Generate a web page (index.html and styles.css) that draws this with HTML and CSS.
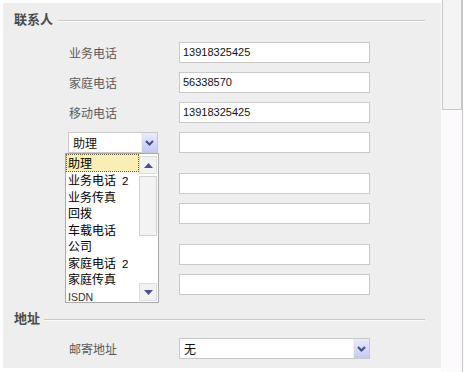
FILE: index.html
```html
<!DOCTYPE html>
<html lang="zh-CN">
<head>
<meta charset="utf-8">
<title>联系人</title>
<link rel="stylesheet" href="styles.css">
</head>
<body>
<div class="window">
  <div class="panel">
    <div class="section"><span class="section-title">联系人</span><span class="rule"></span></div>
    <div class="group first">
      <div class="row"><span class="label">业务电话</span><span class="field">13918325425</span></div>
      <div class="row"><span class="label">家庭电话</span><span class="field">56338570</span></div>
      <div class="row"><span class="label">移动电话</span><span class="field">13918325425</span></div>
      <div class="row">
        <span class="label">
          <span class="select small">
            <span class="select-text">助理</span>
            <span class="arrow-btn"><svg width="9" height="6" viewBox="0 0 9 6"><polyline points="1,1 4.5,4.5 8,1" fill="none" stroke="#3f4d86" stroke-width="2"/></svg></span>
            <span class="dropdown">
              <span class="items">
                <span class="item active">助理</span>
                <span class="item">业务电话<span class="num">2</span></span>
                <span class="item">业务传真</span>
                <span class="item">回拨</span>
                <span class="item">车载电话</span>
                <span class="item">公司</span>
                <span class="item">家庭电话<span class="num">2</span></span>
                <span class="item">家庭传真</span>
                <span class="item latin">ISDN</span>
              </span>
              <span class="list-scroll">
                <span class="sbtn"><svg width="9" height="5" viewBox="0 0 9 5"><polygon points="0,5 4.5,0 9,5" fill="#4a4fa6"/></svg></span>
                <span class="sthumb"></span>
                <span class="strack"></span>
                <span class="sbtn"><svg width="9" height="5" viewBox="0 0 9 5"><polygon points="0,0 4.5,5 9,0" fill="#4a4fa6"/></svg></span>
              </span>
            </span>
          </span>
        </span>
        <span class="field"></span>
      </div>
    </div>
    <div class="group">
      <div class="row"><span class="label"></span><span class="field"></span></div>
      <div class="row"><span class="label"></span><span class="field"></span></div>
    </div>
    <div class="group">
      <div class="row"><span class="label"></span><span class="field"></span></div>
      <div class="row"><span class="label"></span><span class="field"></span></div>
    </div>
    <div class="section addr"><span class="section-title">地址</span><span class="rule"></span></div>
    <div class="group last">
      <div class="row"><span class="label">邮寄地址</span>
        <span class="field select wide"><span class="select-text">无</span>
          <span class="arrow-btn"><svg width="9" height="6" viewBox="0 0 9 6"><polyline points="1,1 4.5,4.5 8,1" fill="none" stroke="#3f4d86" stroke-width="2"/></svg></span>
        </span>
      </div>
    </div>
  </div>
  <div class="vscroll"><div class="vthumb"></div></div>
</div>
</body>
</html>
```

FILE: styles.css
```css
* { box-sizing: border-box; }
html, body { margin: 0; padding: 0; background: #ffffff; }
body {
  width: 468px;
  height: 372px;
  overflow: hidden;
  font-family: "Noto Sans CJK SC", "Liberation Sans", sans-serif;
  font-size: 12px;
}
.window {
  display: flex;
  align-items: flex-start;
}
.panel {
  width: 438px;
  height: 365px;
  margin: 3px 0 0 3px;
  background: #eeeeee;
  padding-top: 7px;
}
.section {
  display: flex;
  align-items: center;
  height: 18px;
  padding-left: 11px;
  padding-right: 16px;
  gap: 5px;
}
.section.addr { margin-top: 14px; gap: 4px; }
.section-title {
  font-weight: bold;
  font-size: 13px;
  color: #4a4a4a;
  line-height: 18px;
}
.rule {
  flex: 1;
  height: 2px;
  border-top: 1px solid #c8c8c8;
  border-bottom: 1px solid #fbfbfb;
  margin-top: 3px;
}
.group {
  display: flex;
  flex-direction: column;
  gap: 9px;
  padding-left: 66px;
  margin-top: 20px;
}
.group.first { margin-top: 14px; }
.group.last { margin-top: 11px; }
.row {
  display: flex;
  align-items: center;
  height: 21px;
}
.label {
  width: 110px;
  flex: none;
  color: #5a5a5a;
  font-size: 12px;
  line-height: 21px;
  position: relative;
}
.field {
  width: 191px;
  height: 21px;
  flex: none;
  background: #ffffff;
  border: 1px solid #c9c9c9;
  font-family: "Liberation Sans", "Noto Sans CJK SC", sans-serif;
  font-size: 11px;
  color: #111;
  line-height: 19px;
  padding-left: 3px;
}
.select {
  display: flex;
  align-items: center;
  height: 21px;
  background: #ffffff;
  border: 1px solid #c9c9c9;
  position: relative;
}
.select.small {
  width: 90px;
  margin-left: -1px;
}
.select-text {
  flex: 1;
  padding-left: 4px;
  font-family: "Noto Sans CJK SC", sans-serif;
  font-size: 12px;
  color: #111;
  line-height: 19px;
}
.select.wide { padding-left: 0; }
.arrow-btn {
  width: 16px;
  height: 19px;
  flex: none;
  display: flex;
  align-items: center;
  justify-content: center;
  background: linear-gradient(#e9ecfd, #c3c9f2);
  border-left: 1px solid #eef0fb;
}
.dropdown {
  position: absolute;
  top: 20px;
  left: -4px;
  width: 94px;
  height: 150px;
  background: #ffffff;
  border: 1px solid #a9a9a9;
  display: flex;
  z-index: 5;
}
.items {
  flex: 1;
  display: flex;
  flex-direction: column;
}
.item {
  height: 16.5px;
  line-height: 16.5px;
  padding-left: 2px;
  font-family: "Noto Sans CJK SC", sans-serif;
  font-size: 12px;
  color: #000;
  white-space: nowrap;
}
.num {
  font-family: "Liberation Sans", sans-serif;
  font-size: 11.5px;
  margin-left: 6px;
}
.item.active {
  height: 18px;
  line-height: 16px;
  background: #fbeeb4;
  border: 1px dotted #6b5e3a;
  padding-left: 1px;
}
.item.latin {
  font-family: "Liberation Sans", sans-serif;
  font-size: 10.5px;
  color: #333;
  height: 18px;
  line-height: 18px;
  margin-top: auto;
}
.list-scroll {
  width: 19px;
  flex: none;
  display: flex;
  flex-direction: column;
  padding: 2px 1px 1px 0;
}
.sbtn {
  height: 18px;
  flex: none;
  display: flex;
  align-items: center;
  justify-content: center;
  background: #f2f2f2;
  border: 1px solid #dcdcdc;
}
.sthumb {
  height: 60px;
  margin-top: 2px;
  background: #f3f3f3;
  border: 1px solid #d0d0d0;
}
.strack { flex: 1; }
.vscroll {
  width: 22px;
  height: 372px;
  flex: none;
  background: #fdfafd;
  border-right: 1px solid #c4c4c4;
  padding-left: 1px;
}
.vthumb {
  width: 20px;
  height: 110px;
  background: #f4f4f4;
  border: 1px solid #c8c8c8;
  border-top: none;
}
```
